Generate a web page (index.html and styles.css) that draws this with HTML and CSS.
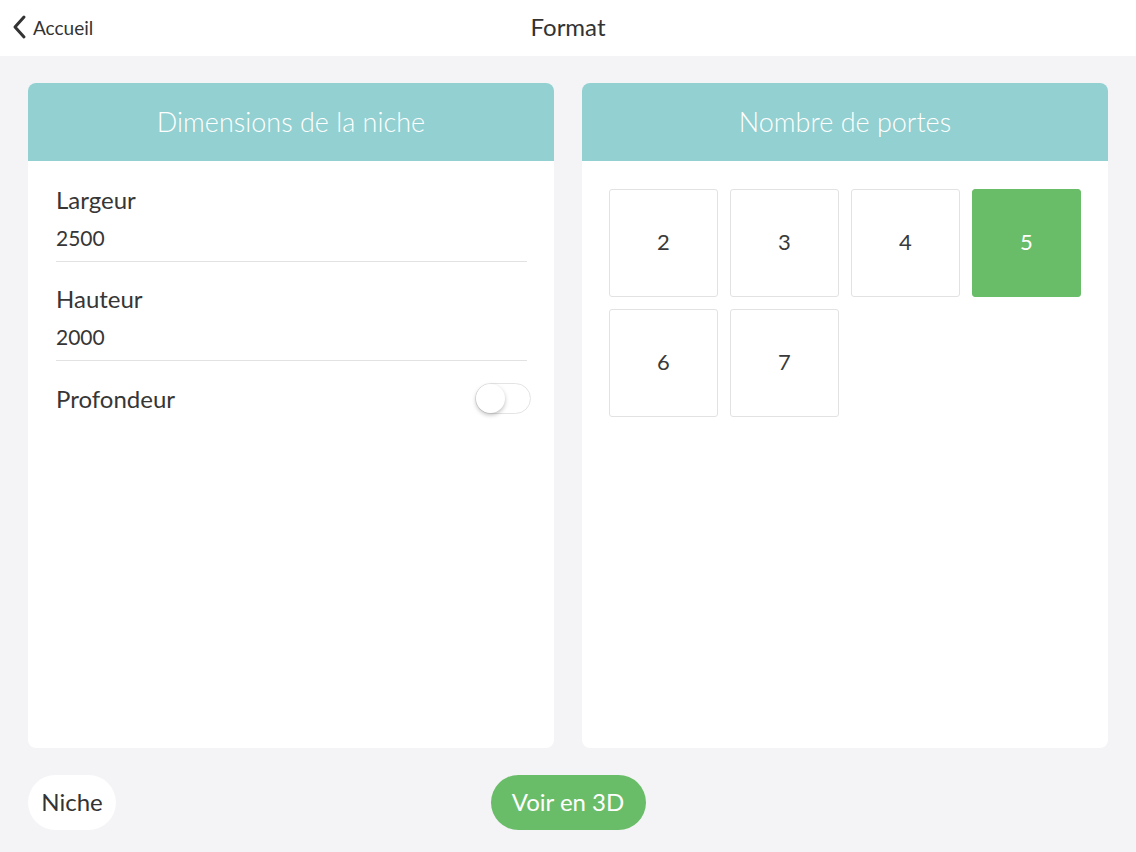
FILE: index.html
```html
<!doctype html>
<html lang="fr">
<head>
    <meta charset="UTF-8" />
    <title>Format</title>
    <link rel="stylesheet" href="styles.css">
</head>
<body>
    <div class="topBar">
        <a class="backLink" href="#">
            <svg width="18" height="26" viewBox="0 0 18 26"><path d="M13 3 L4 13 L13 23" fill="none" stroke="#333" stroke-width="3" stroke-linecap="round" stroke-linejoin="round"/></svg>
            <span>Accueil</span>
        </a>
        <h1 class="pageTitle">Format</h1>
    </div>

    <div class="mainArea">
        <div class="card">
            <div class="cardHeader">Dimensions de la niche</div>
            <div class="cardBody">
                <div class="field">
                    <div class="fieldLabel">Largeur</div>
                    <div class="fieldValue">2500</div>
                </div>
                <div class="field">
                    <div class="fieldLabel">Hauteur</div>
                    <div class="fieldValue">2000</div>
                </div>
                <div class="switchRow">
                    <div class="fieldLabel">Profondeur</div>
                    <div class="toggle"><div class="knob"></div></div>
                </div>
            </div>
        </div>
        <div class="card">
            <div class="cardHeader">Nombre de portes</div>
            <div class="doorGrid">
                <div class="doorBox">2</div>
                <div class="doorBox">3</div>
                <div class="doorBox">4</div>
                <div class="doorBox selected">5</div>
                <div class="doorBox">6</div>
                <div class="doorBox">7</div>
            </div>
        </div>
    </div>

    <div class="footer">
        <button class="pill nichePill">Niche</button>
        <button class="pill greenPill">Voir en 3D</button>
        <div></div>
    </div>
</body>
</html>
```
FILE: styles.css
```css
html {
    background: #f4f3f6;
}
body {
    margin: 0;
    font-family: Lato, "Noto Sans", sans-serif;
    color: #363636;
    height: 852px;
    display: flex;
    flex-direction: column;
}
.topBar {
    height: 56px;
    background: #fff;
    display: grid;
    grid-template-columns: 1fr auto 1fr;
    align-items: center;
}
.backLink {
    display: flex;
    align-items: center;
    gap: 4px;
    padding-left: 11px;
    padding-bottom: 2px;
    color: #333;
    text-decoration: none;
    font-size: 19px;
}
.pageTitle {
    margin: 0 0 3px 0;
    font-size: 24px;
    font-weight: 400;
    color: #333;
}
.mainArea {
    display: flex;
    gap: 28px;
    padding: 27px 28px 0 28px;
}
.card {
    flex: 1;
    height: 665px;
    background: #fff;
    border-radius: 8px;
    overflow: hidden;
}
.cardHeader {
    height: 76px;
    padding-bottom: 2px;
    background: #93d0d1;
    color: #fff;
    font-size: 27px;
    font-weight: 300;
    display: flex;
    align-items: center;
    justify-content: center;
}
.cardBody {
    padding: 24px 27px 0 28px;
    display: flex;
    flex-direction: column;
    gap: 22px;
}
.field {
    border-bottom: 1px solid #e2e2e2;
    padding-bottom: 8px;
}
.fieldLabel {
    font-size: 24px;
    line-height: 30px;
}
.fieldValue {
    font-size: 21px;
    line-height: 30px;
    margin-top: 8px;
}
.switchRow {
    display: flex;
    justify-content: space-between;
    align-items: center;
}
.toggle {
    width: 54px;
    height: 29px;
    border: 1px solid #e4e4e4;
    border-radius: 16px;
    margin-right: -4px;
    display: flex;
    align-items: center;
}
.knob {
    width: 29px;
    height: 29px;
    border-radius: 50%;
    background: #fff;
    box-shadow: 0 2px 4px rgba(0, 0, 0, 0.25);
}
.doorGrid {
    display: grid;
    grid-template-columns: repeat(4, 109px);
    grid-auto-rows: 108px;
    gap: 12px;
    padding: 28px 0 0 27px;
}
.doorBox {
    border: 1px solid #e2e2e2;
    border-radius: 3px;
    display: flex;
    align-items: center;
    justify-content: center;
    font-size: 22px;
    color: #3a3a3a;
    padding-bottom: 3px;
}
.doorBox.selected {
    background: #6abd68;
    border-color: #6abd68;
    color: #fff;
}
.footer {
    display: grid;
    grid-template-columns: 1fr auto 1fr;
    align-items: center;
    padding: 27px 28px 0 28px;
}
.pill {
    height: 55px;
    border: none;
    border-radius: 28px;
    font-family: Lato, "Noto Sans", sans-serif;
    font-size: 24px;
    padding: 0 0 2px 0;
}
.nichePill {
    justify-self: start;
    background: #fff;
    color: #333;
    width: 88px;
}
.greenPill {
    background: #6abd68;
    color: #fff;
    width: 155px;
}
```
